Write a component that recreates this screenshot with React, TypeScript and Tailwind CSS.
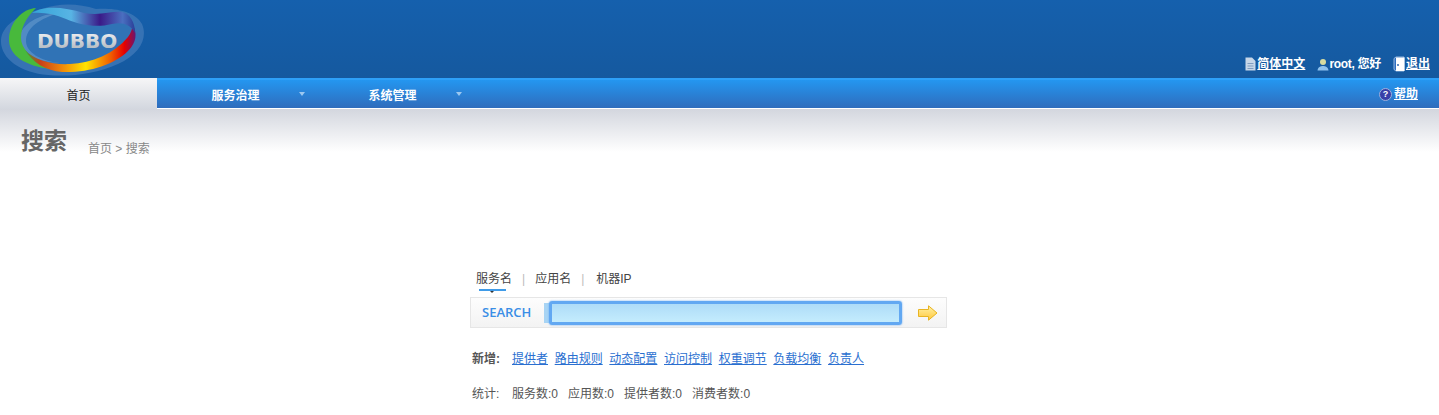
import React from 'react';

const FONT = '"Liberation Sans", "Noto Sans CJK SC", sans-serif';

const ADD_LINKS = ['提供者', '路由规则', '动态配置', '访问控制', '权重调节', '负载均衡', '负责人'];
const STATS = ['服务数:0', '应用数:0', '提供者数:0', '消费者数:0'];

function Logo() {
  return (
    <svg width="146" height="78" viewBox="0 0 146 78" className="block shrink-0">
      <defs>
        <linearGradient id="ring" x1="0" y1="0" x2="1" y2="0">
          <stop offset="0" stopColor="#3f9a3a" />
          <stop offset="0.14" stopColor="#c8401a" />
          <stop offset="0.34" stopColor="#f08a08" />
          <stop offset="0.55" stopColor="#ffe400" />
          <stop offset="0.78" stopColor="#f05a00" />
          <stop offset="0.9" stopColor="#e60000" />
          <stop offset="1" stopColor="#6a1470" />
        </linearGradient>
        <linearGradient id="band" x1="0" y1="0" x2="1" y2="0">
          <stop offset="0" stopColor="#35a4d8" />
          <stop offset="0.38" stopColor="#58b4e4" />
          <stop offset="0.66" stopColor="#3a1a88" />
          <stop offset="0.88" stopColor="#4a6fc0" />
          <stop offset="1" stopColor="#2a3f98" />
        </linearGradient>
        <linearGradient id="word" x1="0" y1="0" x2="0" y2="1">
          <stop offset="0" stopColor="#fafafa" />
          <stop offset="1" stopColor="#a4adb6" />
        </linearGradient>
      </defs>
      <path d="M1 40C2 26 18 14 42 9C58 3 78 3 96 9C112 8 134 10 142 24C148 38 140 54 118 64C96 74 70 77 48 75C20 73 0 58 1 40Z" fill="#3f78b8" fillOpacity="0.8" />
      <path d="M22 40C20 26 34 15 56 13C78 11 92 19 110 17C124 15 133 20 131 33C128 50 102 62 72 64C46 66 24 56 22 40Z" fill="#3073b6" />
      <path d="M19 38C22 24 38 14 60 13C40 18 26 28 26 41C26 52 40 61 60 63C38 62 17 54 19 38Z" fill="#6d9fd0" fillOpacity="0.55" />
      <path d="M9 38C10 22 22 9 36 8C30 14 21 24 21 38C21 48 30 58 50 69C26 66 8 56 9 38Z" fill="#48b93c" />
      <path d="M25 50C34 60 52 65 70 64C92 63 114 54 128 37C131 33 132 29 133 25C137 33 137 42 128 51C114 65 88 73 62 72C46 71 32 62 25 50Z" fill="url(#ring)" />
      <path d="M32 13C44 5 64 7 84 13C100 16 112 11 122 12C130 14 135 22 135 33C130 24 122 22 112 24C96 28 80 25 66 19C54 14 44 12 32 13Z" fill="url(#band)" />
      <text x="37" y="48" fontFamily='"DejaVu Sans", sans-serif' fontSize="20" fontWeight="700" fill="url(#word)">
        DUBBO
      </text>
    </svg>
  );
}

function DocIcon() {
  return (
    <svg width="11" height="14" viewBox="0 0 11 14" className="shrink-0">
      <path d="M0.5 0.5H7L10.5 4V13.5H0.5Z" fill="#c6d6e8" />
      <path d="M2.5 6.5H8.5M2.5 9H8.5M2.5 11.5H8.5" stroke="#7f9cc0" strokeWidth="1" />
    </svg>
  );
}

function UserIcon() {
  return (
    <svg width="12" height="13" viewBox="0 0 12 13" className="shrink-0">
      <circle cx="6" cy="4" r="3" fill="#d8dca0" />
      <path d="M0.5 12.5C1 9 3.5 8 6 8C8.5 8 11 9 11.5 12.5Z" fill="#8fc2ee" />
    </svg>
  );
}

function DoorIcon() {
  return (
    <svg width="12" height="16" viewBox="0 0 12 16" className="shrink-0">
      <path d="M1 2.5L3 1H11V15H3L1 13.5Z" fill="#2f6fc0" stroke="#b8cfee" strokeWidth="0.8" />
      <path d="M3 1.5H11.5V15H3Z" fill="#ffffff" />
      <circle cx="5" cy="9" r="0.9" fill="#1f5aa8" />
    </svg>
  );
}

function HelpIcon() {
  return (
    <div className="flex h-[13px] w-[13px] shrink-0 items-center justify-center rounded-full border border-[#9fb0dc] bg-[#3a3fa8] text-[9px] leading-none font-bold text-white">
      ?
    </div>
  );
}

function ArrowIcon() {
  return (
    <svg width="20" height="16" viewBox="0 0 20 16" className="block">
      <defs>
        <linearGradient id="arrow" x1="0" y1="0" x2="0" y2="1">
          <stop offset="0" stopColor="#fff2a8" />
          <stop offset="1" stopColor="#ffc83c" />
        </linearGradient>
      </defs>
      <path d="M0.5 4.5H10.5V0.8L19 8L10.5 15.2V11.5H0.5Z" fill="url(#arrow)" stroke="#e8b422" strokeWidth="1" />
    </svg>
  );
}

function NavItem({ label, width }: { label: string; width: string }) {
  return (
    <div className={`relative flex h-full items-center justify-center text-[12px] font-bold text-white ${width}`}>
      <span className="mt-[3px]">{label}</span>
      <span className="absolute top-[12px] right-[9px] h-0 w-0 border-x-[3px] border-t-[4px] border-x-transparent border-t-[#9cc8f0]" />
    </div>
  );
}

export default function App() {
  return (
    <div className="h-[415px] w-[1439px] overflow-hidden bg-white text-[12px]" style={{ fontFamily: FONT }}>
      <header className="flex h-[78px] items-start justify-between bg-[linear-gradient(#1560ad,#15599f)]">
        <Logo />
        <div className="mt-[55px] mr-[9px] flex items-center text-[12px] font-bold text-white">
          <div className="flex items-center gap-[1px]">
            <DocIcon />
            <a className="underline">简体中文</a>
          </div>
          <div className="ml-[12px] flex items-center">
            <UserIcon />
            <span className="tracking-[-0.3px]">root, 您好</span>
          </div>
          <div className="ml-[12px] flex items-center gap-[1px]">
            <DoorIcon />
            <a className="underline">退出</a>
          </div>
        </div>
      </header>

      <nav className="flex h-[31px] items-stretch bg-white">
        <div className="flex w-[157px] items-center justify-center bg-[linear-gradient(#f6f6f7,#d3d7df)] text-[12px] text-[#222222]">
          <span className="mt-[5px]">首页</span>
        </div>
        <div className="flex flex-1 items-center justify-between border-t-2 border-b border-t-[#2ea0f8] border-b-white bg-[linear-gradient(#2496f0,#2f6cbc)]">
          <div className="flex h-full">
            <NavItem label="服务治理" width="w-[157px]" />
            <NavItem label="系统管理" width="w-[157px]" />
          </div>
          <div className="mr-[21px] flex items-center gap-[2px] text-[12px] font-bold text-white">
            <HelpIcon />
            <a className="underline">帮助</a>
          </div>
        </div>
      </nav>

      <section className="flex h-[43px] items-start bg-[linear-gradient(#d3d6de,#ffffff)] pl-[21px]">
        <h1 className="mt-[18px] text-[23px] leading-[28px] font-bold text-[#666666]">搜索</h1>
        <div className="mt-[32px] ml-[21px] text-[12px] leading-[16px] text-[#888888]">
          首页 &gt; 搜索
        </div>
      </section>

      <main className="ml-[470px] w-[477px] pt-[118px]">
        <div className="flex h-[27px] items-start pl-[6px] text-[12px] leading-[18px] text-[#444444]">
          <div className="relative">
            <span>服务名</span>
            <span className="absolute top-[19px] left-[3px] h-[2px] w-[27px] bg-[#3f9be8]" />
            <span className="absolute top-[21px] left-[14px] h-0 w-0 border-x-[2px] border-t-[2px] border-x-transparent border-t-[#333333]" />
          </div>
          <span className="mx-[10px] text-[#bbbbbb]">|</span>
          <span>应用名</span>
          <span className="mr-[12px] ml-[10px] text-[#bbbbbb]">|</span>
          <span>机器IP</span>
        </div>

        <div className="flex h-[31px] items-center border border-[#e6e6e6] bg-[linear-gradient(#fdfdfd,#f3f3f3)]">
          <span className="w-[73px] pl-[11px] font-['Open_Sans'] text-[13px] font-semibold text-[#3a8ee6]">SEARCH</span>
          <div className="h-[20px] w-[6px] bg-[#a8d4f4]" />
          <input
            readOnly
            className="-ml-[1px] h-[24px] w-[353px] rounded-[3px] border-[3px] border-[#62a8f2] bg-[linear-gradient(#aedcf8,#c4ecfd)] shadow-[0_0_2px_#62a8f2] outline-none"
          />
          <div className="ml-[16px]">
            <ArrowIcon />
          </div>
        </div>

        <div className="mt-[22px] flex items-center pl-[2px] text-[12px] leading-[18px]">
          <span className="w-[40px] font-bold text-[#555555]">新增:</span>
          <div className="flex gap-[6.67px]">
            {ADD_LINKS.map((item) => (
              <a key={item} className="text-[#2a6fd0] underline">
                {item}
              </a>
            ))}
          </div>
        </div>

        <div className="mt-[17px] flex items-center pl-[2px] text-[12px] leading-[18px] text-[#555555]">
          <span className="w-[40px]">统计:</span>
          <div className="flex gap-[10px]">
            {STATS.map((item) => (
              <span key={item}>{item}</span>
            ))}
          </div>
        </div>
      </main>
    </div>
  );
}
